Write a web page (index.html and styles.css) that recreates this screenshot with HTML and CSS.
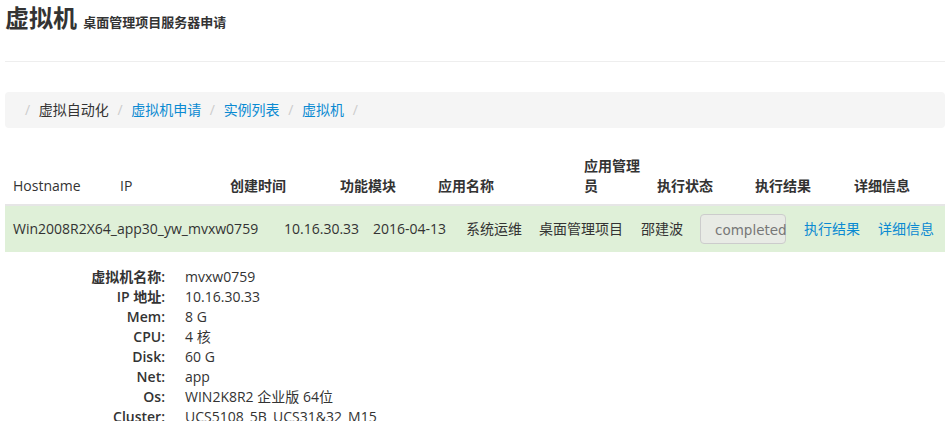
FILE: index.html
```html
<!DOCTYPE html>
<html lang="zh-CN">
<head>
    <meta charset="utf-8">
    <title>虚拟机</title>
    <link rel="stylesheet" href="styles.css">
</head>
<body>
    <div class="content">
        <div class="page-header">
            <h1>虚拟机 <small>桌面管理项目服务器申请</small></h1>
        </div>

        <ol class="breadcrumb">
            <li>虚拟自动化</li>
            <li><a href="#">虚拟机申请</a></li>
            <li><a href="#">实例列表</a></li>
            <li><a href="#">虚拟机</a></li>
            <li></li>
        </ol>

        <table class="table table-head">
            <colgroup>
                <col style="width:107px"><col style="width:110px"><col style="width:110px">
                <col style="width:98px"><col style="width:146px"><col style="width:73px">
                <col style="width:98px"><col style="width:99px"><col>
            </colgroup>
            <thead>
                <tr>
                    <th class="latin">Hostname</th>
                    <th class="latin">IP</th>
                    <th>创建时间</th>
                    <th>功能模块</th>
                    <th>应用名称</th>
                    <th>应用管理员</th>
                    <th>执行状态</th>
                    <th>执行结果</th>
                    <th>详细信息</th>
                </tr>
            </thead>
        </table>
        <table class="table table-body">
            <colgroup>
                <col style="width:271px"><col style="width:89px"><col style="width:93px">
                <col style="width:73px"><col style="width:102px"><col style="width:59px">
                <col style="width:104px"><col style="width:74px"><col>
            </colgroup>
            <tbody>
                <tr class="success">
                    <td>Win2008R2X64_app30_yw_mvxw0759</td>
                    <td>10.16.30.33</td>
                    <td>2016-04-13</td>
                    <td>系统运维</td>
                    <td>桌面管理项目</td>
                    <td>邵建波</td>
                    <td><span class="form-control">completed</span></td>
                    <td><a href="#">执行结果</a></td>
                    <td><a href="#">详细信息</a></td>
                </tr>
            </tbody>
        </table>

        <dl class="dl-horizontal">
            <dt><b>虚拟机名称</b>:</dt><dd>mvxw0759</dd>
            <dt>IP <b>地址</b>:</dt><dd>10.16.30.33</dd>
            <dt>Mem:</dt><dd>8 G</dd>
            <dt>CPU:</dt><dd>4 核</dd>
            <dt>Disk:</dt><dd>60 G</dd>
            <dt>Net:</dt><dd>app</dd>
            <dt>Os:</dt><dd>WIN2K8R2 企业版 64位</dd>
            <dt>Cluster:</dt><dd>UCS5108_5B_UCS31&amp;32_M15</dd>
        </dl>
    </div>
</body>
</html>
```

FILE: styles.css
```css
/* Base */
body {
    margin: 0;
    font-family: "Open Sans", "Noto Sans CJK SC", sans-serif;
    font-size: 14px;
    line-height: 20px;
    color: #333;
    background: #fff;
}
a {color: #0a8ad2; text-decoration: none}
.content {padding: 0 1px 0 5px}

/* Page header */
.page-header {
    padding-bottom: 26px;
    border-bottom: 1px solid #eee;
}
.page-header h1 {
    margin: 5px 0 0;
    font-size: 24px;
    line-height: 26px;
    font-weight: bold;
}
.page-header h1 small {font-size: 13px; color: #333}

/* Breadcrumb */
.breadcrumb {
    list-style: none;
    margin: 30px 0 20px;
    padding: 8px 15px;
    background-color: #f5f5f5;
    border-radius: 4px;
}
.breadcrumb li {display: inline-block}
.breadcrumb li::before {content: "/\00a0"; padding: 0 5px; color: #ccc}

/* Tables */
.table {width: 100%; border-collapse: collapse; table-layout: fixed}
.table th, .table td {padding: 8px; text-align: left; vertical-align: middle}
.table-head th {vertical-align: bottom; border-bottom: 2px solid #e6e6e6}
.table-head th.latin {font-weight: normal}
.table-body td {white-space: nowrap}
.success td {background-color: #dff0d8}

.form-control {
    display: inline-block;
    box-sizing: border-box;
    width: 86px;
    height: 30px;
    padding: 0 0 0 14px;
    font-family: "DejaVu Sans", sans-serif;
    font-size: 13.5px;
    line-height: 30px;
    color: #777;
    background-color: #e8ebe5;
    border: 1px solid #ccc;
    border-radius: 4px;
    vertical-align: middle;
    white-space: nowrap;
}

/* Details */
.dl-horizontal {margin: 15px 0 0}
.dl-horizontal dt {
    float: left;
    clear: left;
    width: 160px;
    text-align: right;
    font-weight: 600;
}
.dl-horizontal dt b {font-weight: bold}
.dl-horizontal dd {margin-left: 180px}
```
